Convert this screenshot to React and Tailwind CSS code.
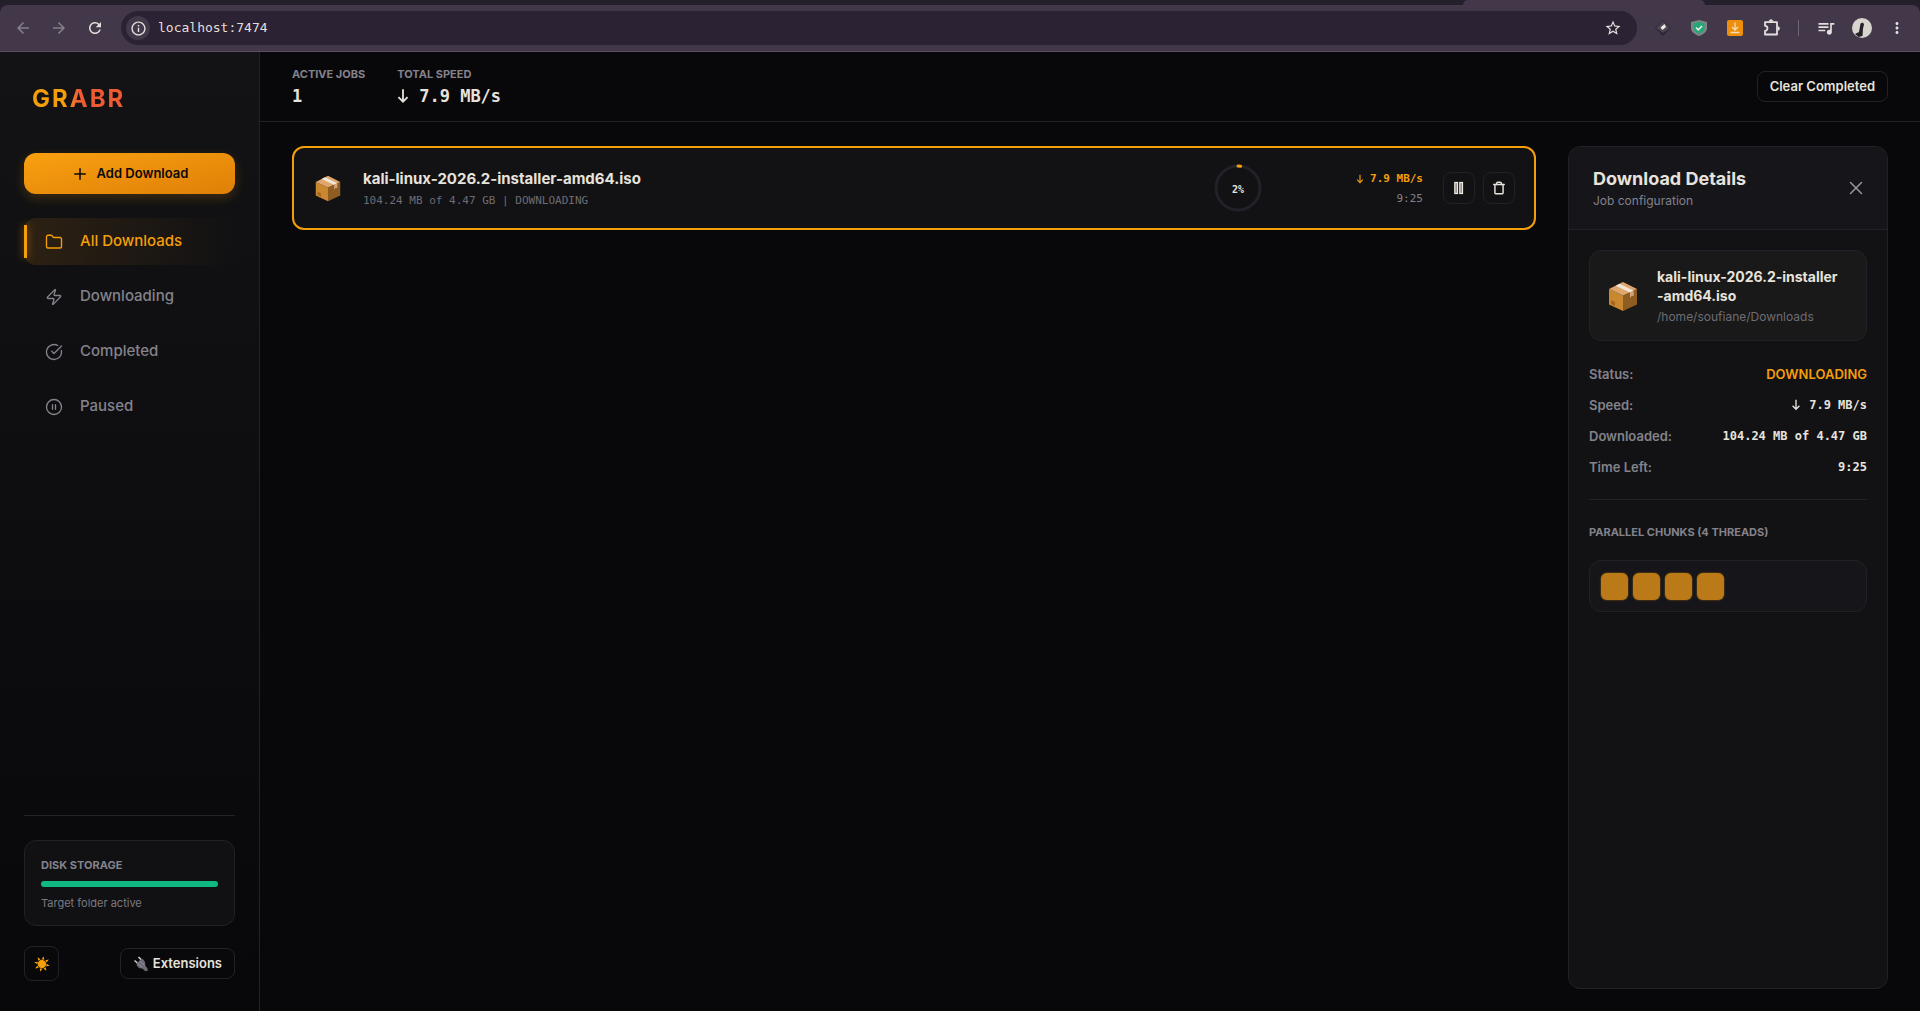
import React from 'react';
import { Plus, Folder, Zap, CircleCheckBig, CirclePause, X, Trash } from 'lucide-react';
import {
  MdArrowBack,
  MdArrowForward,
  MdMoreVert,
  MdOutlineInfo,
  MdOutlineQueueMusic,
  MdRefresh,
  MdStarBorder,
} from 'react-icons/md';

const NAV_ITEMS = [
  { label: 'All Downloads', icon: Folder, active: true },
  { label: 'Downloading', icon: Zap },
  { label: 'Completed', icon: CircleCheckBig },
  { label: 'Paused', icon: CirclePause },
];

const JOB = {
  nameParts: ['kali-linux-2026.2-installer', '-amd64.iso'],
  folder: '/home/soufiane/Downloads',
  status: 'DOWNLOADING',
  speed: '7.9 MB/s',
  progress: '104.24 MB of 4.47 GB',
  timeLeft: '9:25',
  percent: 2,
  threads: 4,
};

const PackageIcon = ({ className }) => (
  <svg viewBox="0 0 32 32" className={className} aria-hidden="true">
    <path d="M2 9 16 15.5V31L2 24.5z" fill="#c9882f" />
    <path d="M30 9 16 15.5V31l14-6.500z" fill="#8f5d22" />
    <path d="M16 2 30 9 16 15.500 2 9z" fill="#dfa66b" />
    <path d="m12.500 3.800 14.200 6.900-3.700 1.700L8.700 5.700z" fill="#efe6da" />
    <path d="m23 12.400 3.700-1.700v5.200l-1.800-.2-1.900 2z" fill="#d2a679" />
    <path d="m4 20 4 2v4l-4-2z" fill="#a5671c" />
  </svg>
);

const SunIcon = () => (
  <svg viewBox="0 0 16 16" className="size-4" fill="#f59e0b" aria-hidden="true">
    <g transform="rotate(12 8 8)">
      <circle cx="8" cy="8" r="4.200" />
      <path d="M8 0 9.300 3.500H6.700zM8 16l1.300-3.500H6.700zM0 8l3.500-1.300v2.600zM16 8l-3.500-1.300v2.600zM2.300 2.300l3.300 1.400-1.900 1.900zM13.700 2.300l-1.400 3.300-1.900-1.900zM2.300 13.700l1.400-3.300 1.900 1.900zM13.700 13.700l-3.300-1.400 1.900-1.900z" />
    </g>
  </svg>
);

const PlugIcon = () => (
  <svg viewBox="0 0 16 16" className="size-4" aria-hidden="true">
    <path d="M1.500 4.500 4.500 7M5.500 1l3 3" stroke="#d6d3d1" strokeWidth="1.500" />
    <path d="M9 2.500 3.300 7.600c.4 3.200 2.600 5.200 6 5l3 2.600 2.400-.400-.2-2.600-2.200-2.500c.3-3-.8-5.500-3.300-7.200z" fill="#6d6976" />
    <path d="m5 7.500 4.500 4M7.500 5.200l4 4.300" stroke="#a3a0aa" strokeWidth=".800" />
  </svg>
);

const PuzzleIcon = () => (
  <svg viewBox="0 0 18 18" className="size-[18px]" fill="none" stroke="currentColor" strokeWidth="1.800" strokeLinejoin="round" aria-hidden="true">
    <path d="M2 3.200h12v12.300H2v-3.700a2.500 2.500 0 0 0 0-5z" />
    <path d="M6 2.600a2 2 0 0 1 4 0zM14.600 7.500a2 2 0 0 1 0 4z" fill="currentColor" strokeWidth=".500" />
  </svg>
);

const PauseIcon = () => (
  <svg viewBox="0 0 14 14" className="size-3.5" fill="#8b8889" stroke="#f0ece4" strokeWidth="1.200" aria-hidden="true">
    <rect x="2.800" y="1.500" width="2.700" height="11" />
    <rect x="7.800" y="1.500" width="2.700" height="11" />
  </svg>
);

const ArrowDown = ({ className }) => (
  <svg viewBox="0 0 10 14" className={className} fill="none" stroke="currentColor" strokeWidth="1.600" aria-hidden="true">
    <path d="M5 1v11M1 8l4 4 4-4" />
  </svg>
);

const ProgressRing = ({ percent }) => {
  const length = 2 * Math.PI * 22;
  return (
    <div className="relative size-12">
      <svg viewBox="0 0 48 48" className="size-12 -rotate-90" fill="none" strokeWidth="3">
        <circle cx="24" cy="24" r="22" stroke="#22212a" />
        <circle
          cx="24"
          cy="24"
          r="22"
          stroke="#f59e0b"
          strokeLinecap="round"
          strokeDasharray={`${(length * percent) / 100} ${length}`}
        />
      </svg>
      <span className="absolute inset-0 flex items-center justify-center pt-0.5 font-['DejaVu_Sans_Mono',monospace] text-[10px] font-bold">
        {percent}%
      </span>
    </div>
  );
};

const BrowserBar = () => (
  <div className="bg-[#231f2b]">
    <div className="flex h-[5px] justify-end">
      <div className="mr-[215px] w-[242px] rounded-t-md bg-[#42384a]" />
    </div>
    <div className="flex h-[47px] items-center rounded-t-lg border-b border-[#575060] bg-[#42384a] text-[#e4dfdc]">
      <div className="flex w-[121px] items-center gap-[18px] pl-3.5">
        <button aria-label="Back" className="text-[#85808a]">
          <MdArrowBack size={18} />
        </button>
        <button aria-label="Forward" className="text-[#85808a]">
          <MdArrowForward size={18} />
        </button>
        <button aria-label="Reload">
          <MdRefresh size={18} />
        </button>
      </div>
      <div className="flex h-[34px] flex-1 items-center rounded-full bg-[#2b2233] pr-[15px] pl-[5px]">
        <span className="flex size-6 items-center justify-center rounded-full bg-[#42384a]">
          <MdOutlineInfo size={17} />
        </span>
        <input
          aria-label="Address"
          defaultValue="localhost:7474"
          className="ml-2 min-w-0 flex-1 bg-transparent font-['DejaVu_Sans_Mono',monospace] text-[13px] outline-none"
        />
        <button aria-label="Bookmark">
          <MdStarBorder size={18} />
        </button>
      </div>
      <div className="flex items-center pr-[14px] pl-[18px]">
        <div className="flex items-center gap-5">
          <svg viewBox="0 0 16 16" className="size-4" aria-hidden="true">
            <path d="M8 0 16 8l-8 8-8-8z" fill="#2c2733" />
            <path d="M8 1 15 8l-7 5-7-5z" fill="#4c4355" />
            <path d="m5.500 7.500 4-3.500 1.500 3-3.500 3z" fill="#f0ece4" />
          </svg>
          <svg viewBox="0 0 16 16" className="size-4" aria-hidden="true">
            <path d="M8 0 16 2v6c0 4-4 6.500-8 8-4-1.500-8-4-8-8V2z" fill="#7f8583" />
            <path d="M8 2 13.500 3.500V8c0 3-3 4.500-5.500 5.700C5.500 12.500 2.500 11 2.500 8V3.500z" fill="#23a67a" />
            <path d="m5 7.500 2.300 2.300L11 6" fill="none" stroke="#f0ece4" strokeWidth="1.600" />
          </svg>
          <svg viewBox="0 0 16 16" className="size-4" aria-hidden="true">
            <rect width="16" height="16" rx="2" fill="#ee8f0c" />
            <path d="M8 2.500v7M5 7l3 3 3-3M3.500 12.500h9" fill="none" stroke="#f6dfb4" strokeWidth="1.300" />
          </svg>
          <PuzzleIcon />
        </div>
        <div className="mx-[17px] h-4 w-px bg-[#6d6474]" />
        <div className="flex items-center gap-4">
          <MdOutlineQueueMusic size={20} />
          <svg viewBox="0 0 20 20" className="size-5" aria-hidden="true">
            <circle cx="10" cy="10" r="10" fill="#d8d4ce" />
            <path d="M8.500 5.500 11 4.500l1 2-1 4-.5 7.500-4 1-3.500-3 4-2z" fill="#252229" />
          </svg>
          <button aria-label="Menu">
            <MdMoreVert size={18} />
          </button>
        </div>
      </div>
    </div>
  </div>
);

const Sidebar = () => (
  <aside className="flex w-[260px] shrink-0 flex-col border-r border-[#222127] bg-linear-to-b from-[#131315] to-[#08080a] px-6 pt-[29px] pb-[30px]">
    <h1 className="ml-2 w-max bg-linear-to-r from-[#f59e0b] from-35% to-[#ef5a33] to-50% bg-clip-text text-[24px] leading-9 font-bold tracking-[2px] text-transparent">
      GRABR
    </h1>
    <button className="mt-9 flex h-[41px] items-center justify-center gap-2 rounded-xl bg-linear-to-br from-[#f9a010] to-[#df8008] text-[13px] font-semibold text-[#09090b] shadow-[0_4px_12px_rgba(245,158,11,0.2)]">
      <Plus size={18} />
      Add Download
    </button>
    <nav className="mt-6 flex flex-col gap-2">
      {NAV_ITEMS.map(({ label, icon: Icon, active }) => (
        <a
          key={label}
          href="#"
          className={`relative flex h-[47px] items-center gap-[17px] rounded-xl pl-[21px] text-[15px] font-medium ${
            active ? 'bg-linear-to-r from-[#2d2113] to-transparent text-[#f59e0b]' : 'text-[#84828b]'
          }`}
        >
          {active && (
            <span className="absolute top-[7px] left-0 h-[33px] w-[3px] bg-[#f59e0b] shadow-[0_0_8px_rgba(245,158,11,0.6)]" />
          )}
          <Icon size={18} strokeWidth={1.8} />
          {label}
        </a>
      ))}
    </nav>
    <div className="mt-auto border-t border-[#222127] pt-6">
      <div className="rounded-xl border border-[#222127] bg-[#111113] px-4 pt-4 pb-3.5">
        <div className="text-[11px] leading-4 font-bold text-[#84828b]">DISK STORAGE</div>
        <div className="mt-2 h-1.5 rounded-full bg-[#10b981]" />
        <div className="mt-2 text-[11px] leading-4 text-[#7b7982]">Target folder active</div>
      </div>
      <div className="mt-5 flex items-center justify-between">
        <button aria-label="Toggle theme" className="flex size-[35px] items-center justify-center rounded-lg border border-[#222127]">
          <SunIcon />
        </button>
        <button className="flex h-[31px] items-center gap-1 rounded-lg border border-[#222127] px-3 text-[13px] font-semibold">
          <PlugIcon />
          Extensions
        </button>
      </div>
    </div>
  </aside>
);

const Stat = ({ label, children }) => (
  <div>
    <div className="text-[11px] leading-4 font-bold text-[#84828b]">{label}</div>
    <div className="mt-0.5 flex items-center gap-2.5 font-['DejaVu_Sans_Mono',monospace] text-[17px] leading-6 font-bold">
      {children}
    </div>
  </div>
);

const Header = () => (
  <header className="flex h-[70px] items-center justify-between border-b border-[#222127] px-8">
    <div className="flex gap-8">
      <Stat label="ACTIVE JOBS">1</Stat>
      <Stat label="TOTAL SPEED">
        <ArrowDown className="h-4 w-3" />
        {JOB.speed}
      </Stat>
    </div>
    <button className="h-[31px] rounded-lg border border-[#222127] px-3 text-[13px] font-semibold">
      Clear Completed
    </button>
  </header>
);

const DownloadCard = ({ job }) => (
  <div className="flex h-[84px] items-center rounded-xl border-2 border-[#f59e0b] bg-[#121214] pr-[19px] pl-5">
    <PackageIcon className="size-7" />
    <div className="ml-[21px] min-w-0 flex-1 pt-0.5">
      <div className="truncate text-[15px] leading-5 font-bold">{job.nameParts.join('')}</div>
      <div className="mt-1 font-['DejaVu_Sans_Mono',monospace] text-[11px] leading-4 text-[#6e6c75]">
        {job.progress} | {job.status}
      </div>
    </div>
    <ProgressRing percent={job.percent} />
    <div className="w-[161px] pt-0.5 text-right font-['DejaVu_Sans_Mono',monospace] text-[11px]">
      <div className="flex items-center justify-end gap-1.5 leading-4 font-bold text-[#f59e0b]">
        <ArrowDown className="h-2.5 w-2" />
        {job.speed}
      </div>
      <div className="mt-1 leading-4 text-[#84828b]">{job.timeLeft}</div>
    </div>
    <div className="ml-5 flex gap-2">
      <button aria-label="Pause" className="flex size-8 items-center justify-center rounded-lg border border-[#222127]">
        <PauseIcon />
      </button>
      <button aria-label="Delete" className="flex size-8 items-center justify-center rounded-lg border border-[#222127]">
        <Trash size={14} strokeWidth={2.5} />
      </button>
    </div>
  </div>
);

const DetailRow = ({ label, children }) => (
  <div className="flex items-center justify-between">
    <dt className="text-[13px] font-semibold text-[#84828b]">{label}</dt>
    <dd className="flex items-center gap-2 font-['DejaVu_Sans_Mono',monospace] text-[12px] font-bold">{children}</dd>
  </div>
);

const DetailsPanel = ({ job }) => (
  <section className="flex w-80 shrink-0 flex-col overflow-hidden rounded-xl border border-[#222127] bg-[#121214]">
    <div className="flex h-[83px] items-center justify-between border-b border-[#222127] bg-[#16151a] pr-5 pl-6">
      <div className="pt-0.5">
        <h2 className="text-[18px] leading-6 font-bold">Download Details</h2>
        <p className="text-[12px] leading-5 text-[#84828b]">Job configuration</p>
      </div>
      <button aria-label="Close" className="text-[#98959c]">
        <X size={22} strokeWidth={1.6} />
      </button>
    </div>
    <div className="p-5">
      <div className="flex items-center gap-[18px] rounded-xl border border-[#222127] bg-[#191919] px-[17px] pt-4 pb-[15px]">
        <PackageIcon className="size-8 shrink-0" />
        <div className="min-w-0">
          <div className="text-[14px] leading-[19px] font-bold">
            {job.nameParts.map((part) => (
              <span key={part} className="inline-block">
                {part}
              </span>
            ))}
          </div>
          <div className="mt-1 text-[12px] leading-4 text-[#6e6c75]">{job.folder}</div>
        </div>
      </div>
      <dl className="mt-[23px] flex flex-col gap-[11px] border-b border-[#222127] pb-[22px] leading-5">
        <DetailRow label="Status:">
          <span className="font-[Inter,sans-serif] text-[13px] font-semibold text-[#f59e0b]">{job.status}</span>
        </DetailRow>
        <DetailRow label="Speed:">
          <ArrowDown className="h-3 w-2.5" />
          {job.speed}
        </DetailRow>
        <DetailRow label="Downloaded:">{job.progress}</DetailRow>
        <DetailRow label="Time Left:">{job.timeLeft}</DetailRow>
      </dl>
      <h3 className="mt-6 text-[11px] leading-4 font-bold text-[#84828b]">
        PARALLEL CHUNKS ({job.threads} THREADS)
      </h3>
      <div className="mt-5 flex h-[52px] items-center gap-[5px] rounded-xl border border-[#222127] bg-[#16151a] px-[11px]">
        {Array.from({ length: job.threads }, (_, index) => (
          <div key={index} className="size-[27px] rounded-md bg-[#bb7a18] shadow-[0_0_2px_rgba(245,158,11,0.6)]" />
        ))}
      </div>
    </div>
  </section>
);

export default function App() {
  return (
    <div className="flex min-h-screen flex-col bg-[#08080a] font-[Inter,sans-serif] text-[#e7e3dc]">
      <BrowserBar />
      <div className="flex flex-1">
        <Sidebar />
        <div className="flex min-w-0 flex-1 flex-col">
          <Header />
          <main className="flex flex-1 gap-8 px-8 pt-6 pb-[22px]">
            <div className="min-w-0 flex-1">
              <DownloadCard job={JOB} />
            </div>
            <DetailsPanel job={JOB} />
          </main>
        </div>
      </div>
    </div>
  );
}
